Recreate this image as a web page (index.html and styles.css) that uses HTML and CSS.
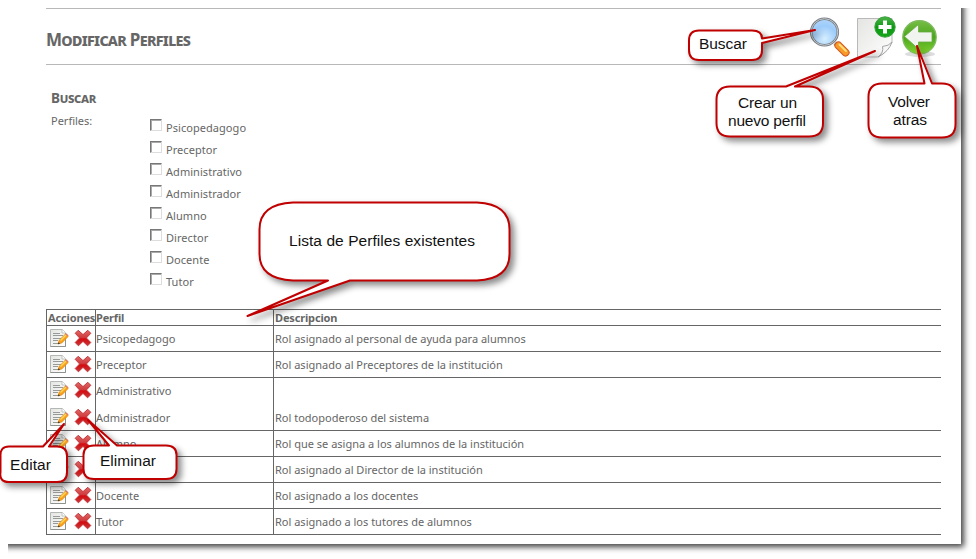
FILE: index.html
```
<!DOCTYPE html>
<html lang="es">
<head>
<meta charset="utf-8">
<title>Modificar Perfiles</title>
<link rel="stylesheet" href="styles.css">
</head>
<body>
<svg class="defs" aria-hidden="true">
  <defs>
    <linearGradient id="paper" x1="0" y1="0" x2="1" y2="1"><stop offset="0" stop-color="#e4e4e2"/><stop offset="1" stop-color="#fff"/></linearGradient>
    <linearGradient id="red" x1="0" y1="0" x2="0" y2="1"><stop offset="0" stop-color="#e06a6a"/><stop offset=".48" stop-color="#cf3a3c"/><stop offset=".55" stop-color="#d40b10"/><stop offset="1" stop-color="#c8383a"/></linearGradient>
    <radialGradient id="lens" cx=".5" cy=".75" r=".8"><stop offset="0" stop-color="#d6efff"/><stop offset=".6" stop-color="#9ccbfa"/><stop offset="1" stop-color="#b4d8fb"/></radialGradient>
    <linearGradient id="green" x1="0" y1="0" x2="0" y2="1"><stop offset="0" stop-color="#4fb34a"/><stop offset=".5" stop-color="#0c9a14"/><stop offset="1" stop-color="#17a51d"/></linearGradient>
    <linearGradient id="lime" x1="0" y1="0" x2="0" y2="1"><stop offset="0" stop-color="#76bd45"/><stop offset=".5" stop-color="#4aa61c"/><stop offset="1" stop-color="#83d431"/></linearGradient>
    <symbol id="edit" viewBox="0 0 20 20">
      <path d="M1.500 1.500h11.700l3.300 3.300v13.700h-15z" fill="url(#paper)" stroke="#b4b8b4"/>
      <path d="M1.500 18.500h15v-13" fill="none" stroke="#8f9390"/>
      <path d="M13 1.500v3.500h3.500" fill="#fff" stroke="#b4b8b4" stroke-width=".8"/>
      <path d="M4 5.500h7M4 7.500h10M4 10.500h8M4 12.500h5M4 15.500h5" stroke="#969a98"/>
      <path d="M9 16l1.200-3.800 6.300-6.300 2.700 2.600-6.400 6.500z" fill="#f9a11b" stroke="#e08a14" stroke-width=".7"/>
      <path d="M11.500 12.500l5.600-5.500" stroke="#ffd757" stroke-width="1.300"/>
      <path d="M16.300 6.200l1.100-1 2.200 2.300-1 1.100z" fill="#dc8068"/>
      <path d="M8.800 16.200l.8-2 1.500 1.300z" fill="#333"/>
    </symbol>
    <symbol id="remove" viewBox="0 0 18 18">
      <path d="M4.200 1.300L9 5.600l4.800-4.300 3 3L12.400 9l4.400 4.500-3.200 3.300L9 12.400l-4.600 4.400-3.200-3.300L5.600 9 1.200 4.300z" fill="url(#red)" stroke="#c4373a" stroke-width="1" stroke-linejoin="round"/>
    </symbol>
  </defs>
</svg>

<main class="page">
  <header class="head">
    <h1 class="title">Modificar Perfiles</h1>
    <div class="tools">
      <svg class="tool" width="42" height="44" viewBox="0 0 42 44">
        <path d="M26 28l4 4" stroke="#888" stroke-width="4"/>
        <path d="M29.500 30.500l7 7" stroke="#d2551e" stroke-width="8" stroke-linecap="round"/>
        <path d="M29.500 30.500l7 7" stroke="#f79a28" stroke-width="6" stroke-linecap="round"/>
        <path d="M30.500 29.500l6.500 6.500" stroke="#ffdf7c" stroke-width="2" stroke-linecap="round"/>
        <circle cx="15.500" cy="17" r="13.300" fill="url(#lens)" stroke="#777d83" stroke-width="2.600"/>
        <circle cx="15.500" cy="17" r="13.300" fill="none" stroke="#c3c8cc" stroke-width="1"/>
      </svg>
      <svg class="tool" width="42" height="44" viewBox="0 0 42 44">
        <path d="M3.500 3.500h34.500v24q-5 9-14 14.500H3.500z" fill="url(#paper)" stroke="#b9b9b9"/>
        <path d="M38 27q-3 4-9.500 4.500 1.500 6-4.500 10.500 11-5.500 14-15z" fill="#f7f7f7" stroke="#a5a5a5"/>
        <circle cx="31" cy="12" r="10.200" fill="url(#green)" stroke="#3b9e3c" stroke-width="1"/>
        <path d="M31 5.500v13M24.500 12h13" stroke="#fff" stroke-width="4"/>
      </svg>
      <svg class="tool" width="42" height="44" viewBox="0 0 42 44">
        <ellipse cx="20" cy="39" rx="15" ry="3" fill="#ddd"/>
        <circle cx="19.500" cy="22.300" r="16.700" fill="url(#lime)" stroke="#7fba5f" stroke-width="1.300"/>
        <path d="M4.500 21.500L18.500 9.500v7.500h13.500v10H18.500v7z" fill="#f2f4f0" stroke="#69a944" stroke-width=".8"/>
      </svg>
    </div>
  </header>

  <section class="search">
    <h2 class="subtitle">Buscar</h2>
    <div class="field">
      <span class="field-name">Perfiles:</span>
      <div class="options">
        <label class="option"><i class="box"></i><span>Psicopedagogo</span></label>
        <label class="option"><i class="box"></i><span>Preceptor</span></label>
        <label class="option"><i class="box"></i><span>Administrativo</span></label>
        <label class="option"><i class="box"></i><span>Administrador</span></label>
        <label class="option"><i class="box"></i><span>Alumno</span></label>
        <label class="option"><i class="box"></i><span>Director</span></label>
        <label class="option"><i class="box"></i><span>Docente</span></label>
        <label class="option"><i class="box"></i><span>Tutor</span></label>
      </div>
    </div>
  </section>

  <div class="grid">
    <div class="row row-head"><b class="cell">Acciones</b><b class="cell">Perfil</b><b class="cell">Descripcion</b></div>
    <div class="row"><div class="cell acts"><svg class="edit"><use href="#edit"/></svg><svg class="remove"><use href="#remove"/></svg></div><div class="cell">Psicopedagogo</div><div class="cell">Rol asignado al personal de ayuda para alumnos</div></div>
    <div class="row"><div class="cell acts"><svg class="edit"><use href="#edit"/></svg><svg class="remove"><use href="#remove"/></svg></div><div class="cell">Preceptor</div><div class="cell">Rol asignado al Preceptores de la institución</div></div>
    <div class="row row-open"><div class="cell acts"><svg class="edit"><use href="#edit"/></svg><svg class="remove"><use href="#remove"/></svg></div><div class="cell">Administrativo</div><div class="cell"></div></div>
    <div class="row"><div class="cell acts"><svg class="edit"><use href="#edit"/></svg><svg class="remove"><use href="#remove"/></svg></div><div class="cell">Administrador</div><div class="cell">Rol todopoderoso del sistema</div></div>
    <div class="row"><div class="cell acts"><svg class="edit"><use href="#edit"/></svg><svg class="remove"><use href="#remove"/></svg></div><div class="cell">Alumno</div><div class="cell">Rol que se asigna a los alumnos de la institución</div></div>
    <div class="row"><div class="cell acts"><svg class="edit"><use href="#edit"/></svg><svg class="remove"><use href="#remove"/></svg></div><div class="cell"></div><div class="cell">Rol asignado al Director de la institución</div></div>
    <div class="row"><div class="cell acts"><svg class="edit"><use href="#edit"/></svg><svg class="remove"><use href="#remove"/></svg></div><div class="cell">Docente</div><div class="cell">Rol asignado a los docentes</div></div>
    <div class="row"><div class="cell acts"><svg class="edit"><use href="#edit"/></svg><svg class="remove"><use href="#remove"/></svg></div><div class="cell">Tutor</div><div class="cell">Rol asignado a los tutores de alumnos</div></div>
  </div>
</main>

<svg class="callouts" width="976" height="559" viewBox="0 0 976 559">
  <g class="bubble">
    <path d="M699 30.500H752Q762 30.500 762 38.500L815 30 762 43V50Q762 60 752 60H699Q689 60 689 50V40.500Q689 30.500 699 30.500Z"/>
    <path d="M730 86.500H786L875 51 795 86.500H809Q823 86.500 823 100V123Q823 136.500 809 136.500H730Q716.500 136.500 716.500 123V100Q716.500 86.500 730 86.500Z"/>
    <path d="M882 83.500H924.500L917 46 932 83.500H942Q955.500 83.500 955.500 97V124Q955.500 137.500 942 137.500H882Q868.500 137.500 868.500 124V97Q868.500 83.500 882 83.500Z"/>
    <path d="M293 202.500H477Q509.500 204 509.500 229.500V254Q509.500 279 477 280.500H350L247.500 316 328 280.500H293Q259.500 279 259.500 254V229.500Q259.500 204 293 202.500Z"/>
    <path d="M9 446.500H43L64 424 49 446.500H57Q67 446.500 67 456V472Q67 482 57 482H9Q-1 482 0.500 472V456Q0 446.500 9 446.500Z"/>
    <path d="M94 445.500H109L88 420 117 445.500H166Q176.500 445.500 176.500 455V469Q176.500 479 166 479H94Q83.500 479 83.500 469V455Q83.500 445.500 94 445.500Z"/>
  </g>
  <g class="note">
    <text x="699" y="49" textLength="48">Buscar</text>
    <text x="738" y="108" textLength="59">Crear un</text>
    <text x="728" y="126" textLength="78">nuevo perfil</text>
    <text x="888" y="107" textLength="42">Volver</text>
    <text x="893" y="125" textLength="34">atras</text>
    <text x="289" y="246" textLength="186">Lista de Perfiles existentes</text>
    <text x="10" y="470" textLength="41">Editar</text>
    <text x="100" y="466" textLength="56">Eliminar</text>
  </g>
</svg>
</body>
</html>
```
FILE: styles.css
```
* { box-sizing: border-box; }
body {
  margin: 0;
  width: 976px;
  height: 559px;
  overflow: hidden;
  background: #fff;
  color: #666;
  font: 11px/16px "Noto Sans", "Open Sans", sans-serif;
  letter-spacing: 0;
}
.defs { position: absolute; width: 0; height: 0; }
.page {
  width: 961px;
  height: 544px;
  padding: 8px 20px 0 46px;
  background: #fff;
  box-shadow: 3px 3px 6px 0 rgba(0, 0, 0, .75);
  clip-path: polygon(0 0, 961px 0, 961px 8px, 976px 8px, 976px 559px, 8px 559px, 8px 544px, 0 544px);
}
.head {
  display: flex;
  justify-content: space-between;
  height: 57px;
  border-top: 1px solid #b8b8b8;
  border-bottom: 1px solid #b8b8b8;
}
.title {
  margin: 19px 0 0;
  font-size: 17px;
  line-height: 24px;
  font-variant: small-caps;
  letter-spacing: -0.7px;
}
.tools { display: flex; gap: 4px; padding: 6px 0 0 0; margin-right: -1px; }
.tool { display: block; }
.tool:first-child { margin-right: -1px; }
.search { height: 244px; padding: 23px 0 0 5px; }
.subtitle {
  margin: 0;
  font-size: 13.500px;
  line-height: 20px;
  font-variant: small-caps;
  letter-spacing: -0.3px;
}
.field { display: flex; padding-top: 5px; }
.field-name { width: 99px; }
.options { display: flex; flex-direction: column; padding-top: 6px; }
.option { display: flex; height: 22px; gap: 4px; }
.option span { line-height: 20px; margin-top: -1px; letter-spacing: 0.050px; }
.box {
  width: 12px;
  height: 12px;
  border: 1px solid;
  border-color: #777 #ddd #ddd #777;
  box-shadow: inset 1px 1px #aaa;
}
.grid { border-top: 1px solid #666; border-left: 1px solid #666; }
.row {
  display: grid;
  grid-template-columns: 49px 178px 1fr;
  height: 26px;
  border-bottom: 1px solid #666;
  line-height: 26px;
}
.row-head { height: 16px; line-height: 16px; letter-spacing: -0.150px; }
.row-open { height: 27px; border-bottom-color: transparent; }
.cell { padding-left: 1px; white-space: nowrap; border-right: 1px solid #666; }
.cell:nth-child(2) { padding-left: 0; }
.cell:last-child { border-right: 0; }
.row-open .cell { height: 27px; }
.acts { display: flex; gap: 5px; padding: 2px 0 0 2px; }
.edit { width: 20px; height: 20px; flex: none; }
.remove { width: 18px; height: 18px; flex: none; margin-top: 1px; }
.callouts { position: absolute; left: 0; top: 0; }
.bubble path {
  fill: #fff;
  stroke: #c00000;
  stroke-width: 2;
  stroke-linejoin: round;
  filter: drop-shadow(4px 4px 3px rgba(0, 0, 0, .45));
}
.note text {
  fill: #111;
  font: 15.500px "Liberation Sans", Arial, sans-serif;
  letter-spacing: 0;
}
```
